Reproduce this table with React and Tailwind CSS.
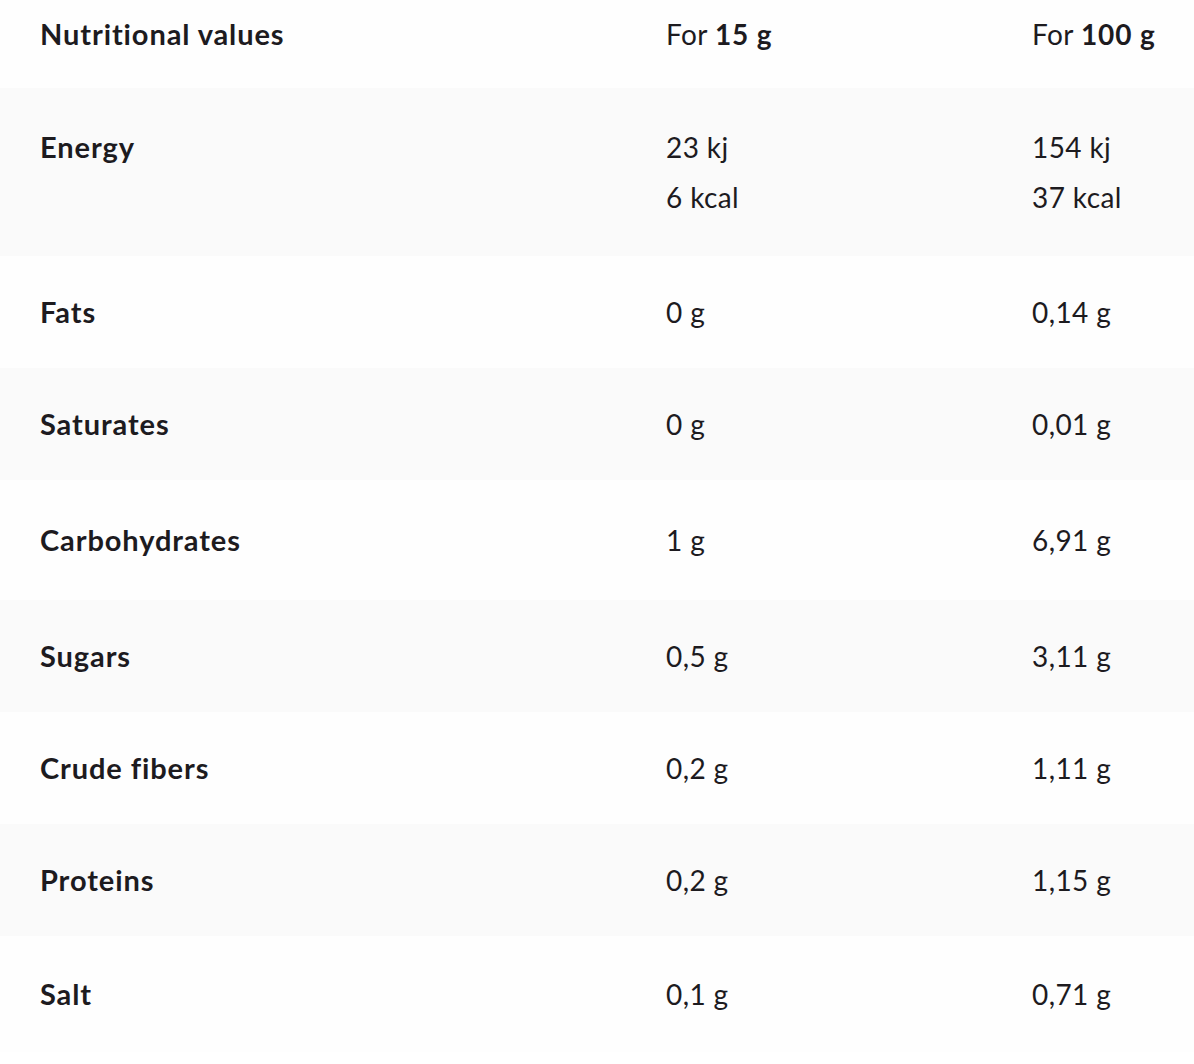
export default function App() {
  const rows = [
    { name: "Energy", a: ["23 kj", "6 kcal"], b: ["154 kj", "37 kcal"], h: "h-[168px]", bg: "bg-[#fafafa]" },
    { name: "Fats", a: ["0 g"], b: ["0,14 g"], h: "h-[112px]", bg: "bg-[#fefefe]" },
    { name: "Saturates", a: ["0 g"], b: ["0,01 g"], h: "h-[112px]", bg: "bg-[#fafafa]" },
    { name: "Carbohydrates", a: ["1 g"], b: ["6,91 g"], h: "h-[120px]", bg: "bg-[#fefefe]" },
    { name: "Sugars", a: ["0,5 g"], b: ["3,11 g"], h: "h-[112px]", bg: "bg-[#fafafa]" },
    { name: "Crude fibers", a: ["0,2 g"], b: ["1,11 g"], h: "h-[112px]", bg: "bg-[#fefefe]" },
    { name: "Proteins", a: ["0,2 g"], b: ["1,15 g"], h: "h-[112px]", bg: "bg-[#fafafa]" },
    { name: "Salt", a: ["0,1 g"], b: ["0,71 g"], h: "h-[116px]", bg: "bg-[#fefefe]" },
  ];
  return (
    <div className="w-[1194px] min-h-[1064px] bg-white text-[#1d1b1f] font-['Lato',sans-serif] text-[28px] tracking-[0.4px] [font-variant-ligatures:none]">
      <div className="flex h-[88px] pt-[16px] leading-[36px] bg-[#fefefe]">
        <div className="w-[666px] pl-[40px] font-bold text-[29px] tracking-[0.9px]">Nutritional values</div>
        <div className="w-[366px]">For <span className="font-bold tracking-[0.9px]">15 g</span></div>
        <div>For <span className="font-bold tracking-[0.9px]">100 g</span></div>
      </div>
      {rows.map((r) => (
        <div key={r.name} className={`flex items-center ${r.h} ${r.bg} leading-[50px]`}>
          <div className="w-[666px] pl-[40px] font-bold text-[29px] tracking-[0.9px] self-start flex items-center h-full">
            <span className={r.a.length > 1 ? "self-start mt-[34px]" : ""}>{r.name}</span>
          </div>
          <div className="w-[366px] flex flex-col">
            {r.a.map((v) => (
              <span key={v}>{v}</span>
            ))}
          </div>
          <div className="flex flex-col">
            {r.b.map((v) => (
              <span key={v}>{v}</span>
            ))}
          </div>
        </div>
      ))}
    </div>
  );
}
